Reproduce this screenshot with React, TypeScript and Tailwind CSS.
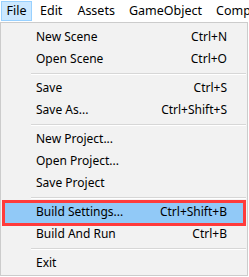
import React from "react";

type Item = { label: string; shortcut?: string; active?: boolean } | "sep";

const items: Item[] = [
  { label: "New Scene", shortcut: "Ctrl+N" },
  { label: "Open Scene", shortcut: "Ctrl+O" },
  "sep",
  { label: "Save", shortcut: "Ctrl+S" },
  { label: "Save As...", shortcut: "Ctrl+Shift+S" },
  "sep",
  { label: "New Project..." },
  { label: "Open Project..." },
  { label: "Save Project" },
  "sep",
  { label: "Build Settings...", shortcut: "Ctrl+Shift+B", active: true },
  { label: "Build And Run", shortcut: "Ctrl+B" },
  "sep",
  { label: "Exit" },
];

export default function App() {
  return (
    <div className="w-[249px] h-[277px] bg-white text-black text-[12px] font-['Noto_Sans','Noto_Sans_CJK_SC',sans-serif] overflow-hidden relative">
      <div className="h-[22px] flex items-stretch pt-[1px] pb-[1px] overflow-hidden text-[12.5px]">
        <div className="shrink-0 ml-[1px] w-[31px] flex items-center justify-center bg-[#cce8ff] border border-[#99d1ff]">
          File
        </div>
        <div className="shrink-0 px-[8px] flex items-center">Edit</div>
        <div className="shrink-0 px-[7px] flex items-center">Assets</div>
        <div className="shrink-0 px-[7px] flex items-center">GameObject</div>
        <div className="shrink-0 px-[7px] flex items-center whitespace-nowrap">Component</div>
      </div>
      <div className="w-[248px] bg-[#f2f2f2] border border-[#cccccc] pt-[3px] pb-[1px]">
        {items.map((it, i) =>
          it === "sep" ? (
            <div key={i} className="h-[7px] flex flex-col justify-center pl-[30px] pr-[1px]">
              <div className="h-[1px] bg-[#d7d7d7]" />
              <div className="h-[1px] bg-white" />
            </div>
          ) : (
            <div
              key={i}
              className={`h-[22px] flex items-center justify-between pl-[34px] pr-[18px] mx-[2px] ${
                it.active ? "bg-[#91c9f7]" : ""
              }`}
            >
              <span className="-ml-[1px]">{it.label}</span>
              {it.shortcut && <span>{it.shortcut}</span>}
            </div>
          )
        )}
      </div>
      <div className="absolute left-[2px] top-[200px] w-[244px] h-[26px] border-[3px] border-[#ff3b3b]" />
    </div>
  );
}
